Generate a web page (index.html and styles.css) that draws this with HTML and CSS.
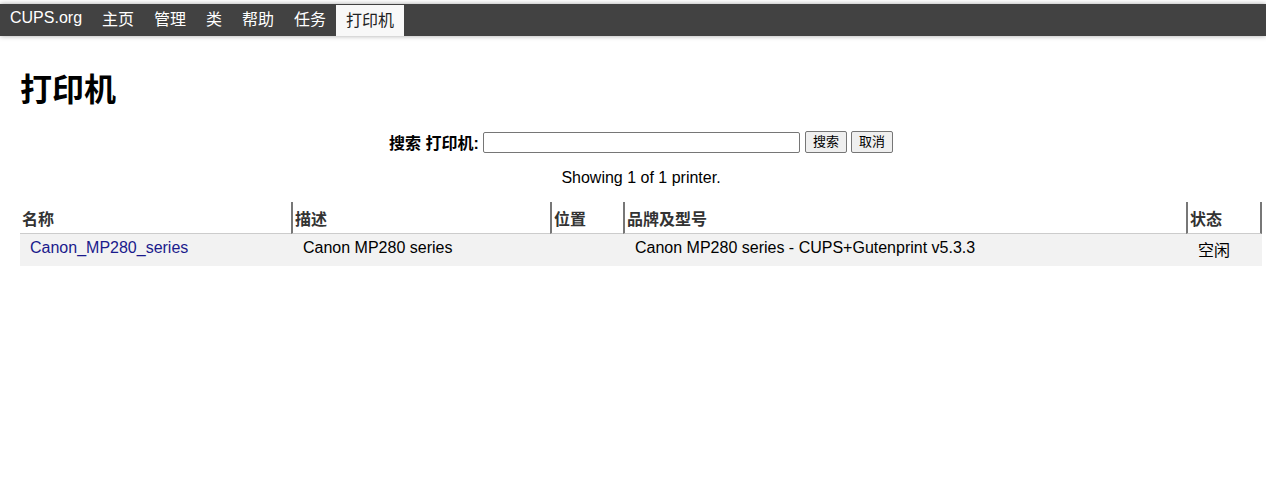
FILE: index.html
```html
<!DOCTYPE html>
<html lang="zh-CN">
<head>
<meta charset="utf-8">
<title>打印机 - CUPS</title>
<link rel="stylesheet" href="styles.css">
</head>
<body>
<div class="header">
  <ul class="nav">
    <li class="nav-item brand"><a href="#">CUPS.org</a></li>
    <li class="nav-item"><a href="#">主页</a></li>
    <li class="nav-item"><a href="#">管理</a></li>
    <li class="nav-item"><a href="#">类</a></li>
    <li class="nav-item"><a href="#">帮助</a></li>
    <li class="nav-item"><a href="#">任务</a></li>
    <li class="nav-item active"><a href="#">打印机</a></li>
  </ul>
</div>
<div class="body">
  <h1 class="title">打印机</h1>
  <form class="search">
    <label class="search-label">搜索 打印机:</label>
    <input class="search-input" type="text">
    <button class="btn btn-first" type="button">搜索</button>
    <button class="btn" type="button">取消</button>
  </form>
  <p class="count">Showing 1 of 1 printer.</p>
  <table class="list">
    <thead>
      <tr>
        <th class="c-name">名称</th>
        <th class="c-desc">描述</th>
        <th class="c-loc">位置</th>
        <th class="c-make">品牌及型号</th>
        <th class="c-state">状态</th>
      </tr>
    </thead>
    <tbody>
      <tr>
        <td class="td-name"><a href="#">Canon_MP280_series</a></td>
        <td>Canon MP280 series</td>
        <td></td>
        <td>Canon MP280 series - CUPS+Gutenprint v5.3.3</td>
        <td class="td-state">空闲</td>
      </tr>
    </tbody>
  </table>
</div>
</body>
</html>
```
FILE: styles.css
```css
html, body {
  margin: 0;
  padding: 0;
  background: #fff;
}
body {
  font-family: "Liberation Sans", "Noto Sans CJK SC", sans-serif;
  font-size: 16px;
  color: #000;
}
.header {
  margin-top: 4px;
  background: #424242;
  height: 32px;
  box-shadow: 0 0 5px rgba(0,0,0,0.35);
}
.nav {
  list-style: none;
  margin: 0;
  padding: 0;
  display: flex;
  height: 32px;
}
.nav-item a {
  display: block;
  padding: 0 10px;
  height: 32px;
  line-height: 32px;
  color: #fff;
  text-decoration: none;
  font-size: 16px;
}
.nav-item.brand a {
  line-height: 27px;
}
.nav-item.active {
  background: #f8f8f8;
  margin-top: 1px;
}
.nav-item.active a {
  color: #222;
  height: 31px;
  line-height: 31px;
}
.body {
  padding: 0 4px 0 20px;
}
.title {
  margin: 32px 0 0;
  font-size: 32px;
  line-height: 44px;
  font-weight: bold;
}
.search {
  display: flex;
  justify-content: center;
  align-items: center;
  margin: 18px 0 0;
}
.search-label {
  font-weight: bold;
  font-size: 16px;
  margin-right: 4px;
}
.search-input {
  box-sizing: border-box;
  width: 317px;
  height: 21px;
  border: 1px solid #767676;
  border-radius: 2px;
  padding: 1px 2px;
  margin: 0;
  font-size: 13px;
}
.btn {
  font-family: "Liberation Sans", "Noto Sans CJK SC", sans-serif;
  box-sizing: border-box;
  font-size: 13px;
  height: 22px;
  padding: 0 7px;
  margin: 0 0 0 4px;
  border: 1px solid #767676;
  border-radius: 2px;
  background: #efefef;
  color: #000;
  line-height: 18px;
}
.btn-first {
  margin-left: 5px;
}
.count {
  text-align: center;
  margin: 14px 0 0;
  line-height: 20px;
}
.list {
  margin-top: 14px;
  width: 1242px;
  table-layout: fixed;
  border-collapse: separate;
  border-spacing: 0;
}
.list th {
  box-sizing: border-box;
  text-align: left;
  font-weight: bold;
  color: #333;
  font-size: 16px;
  line-height: 27px;
  padding: 4px 0 0 2px;
  border-left: 2px solid #777;
  border-bottom: 1px solid #ccc;
  vertical-align: middle;
}
.list th.c-name { border-left: none; width: 271px; }
.list th.c-desc { width: 259px; }
.list th.c-loc { width: 73px; }
.list th.c-make { width: 563px; }
.list th.c-state { border-right: 2px solid #777; }
.list td {
  background: #f2f2f2;
  padding: 5px 0 9px 12px;
  vertical-align: top;
  line-height: 18px;
}
.list td.td-name { padding-left: 10px; }
.list td.td-state { padding-top: 8px; padding-bottom: 6px; }
.list a {
  color: #1a1a8c;
  text-decoration: none;
}
```
